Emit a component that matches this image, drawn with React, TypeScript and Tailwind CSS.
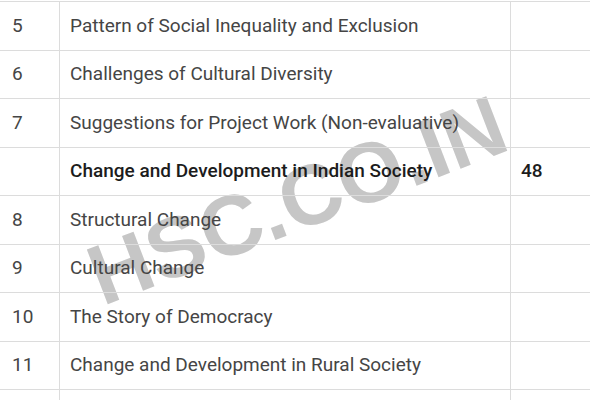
import React from "react";

const rows: { n: string; t: string; m?: string; bold?: boolean }[] = [
  { n: "5", t: "Pattern of Social Inequality and Exclusion" },
  { n: "6", t: "Challenges of Cultural Diversity" },
  { n: "7", t: "Suggestions for Project Work (Non-evaluative)" },
  { n: "", t: "Change and Development in Indian Society", m: "48", bold: true },
  { n: "8", t: "Structural Change" },
  { n: "9", t: "Cultural Change" },
  { n: "10", t: "The Story of Democracy" },
  { n: "11", t: "Change and Development in Rural Society" },
  { n: "12", t: "Change and Development in Industrial Society" },
];

export default function App() {
  return (
    <div
      className="relative h-[400px] w-[600px] overflow-hidden bg-white"
      style={{ fontFamily: "Roboto, 'Liberation Sans', sans-serif" }}
    >
      <div
        className="pointer-events-none absolute left-[297px] top-[200px] z-0 -translate-x-1/2 -translate-y-1/2 -rotate-[21deg] whitespace-nowrap text-[85px] font-bold leading-none text-[#c6c6c6]"
        style={{ fontFamily: "'Liberation Sans', Arial, sans-serif" }}
      >
        HSC.CO.IN
      </div>
      <div className="relative z-10 mt-px w-[590px]">
        {rows.map((r, i) => (
          <div
            key={i}
            className={`flex h-[48.5px] border-t border-[#dcdcdc] text-[19px] ${
              r.bold ? "font-medium text-[#1c1c1c]" : "text-[#454545]"
            }`}
          >
            <div className="flex w-[60px] items-center border-r border-[#dcdcdc] pl-[12px]">
              {r.n}
            </div>
            <div className="flex w-[451px] items-center border-r border-[#dcdcdc] pl-[10px]">
              {r.t}
            </div>
            <div className="flex flex-1 items-center pl-[10px]">{r.m}</div>
          </div>
        ))}
      </div>
    </div>
  );
}
